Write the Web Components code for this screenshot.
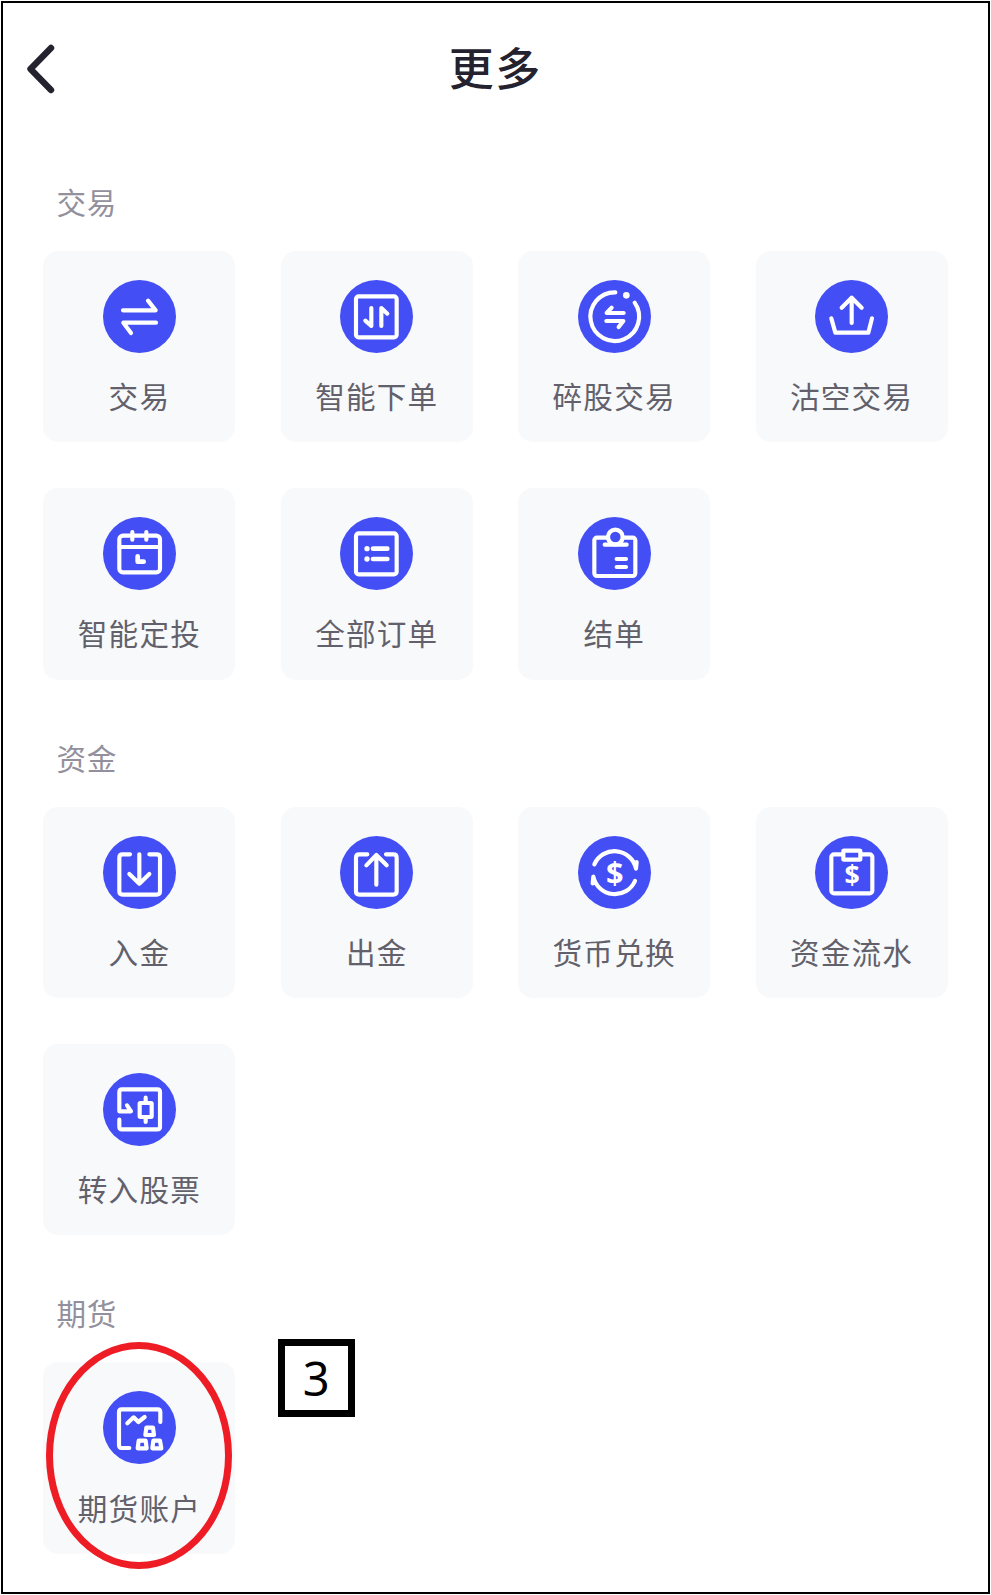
<!DOCTYPE html>
<html lang="zh-CN">
<head>
<meta charset="utf-8">
<title>更多</title>
<style>
  html, body {
    margin: 0;
    background: #fff;
  }
  body {
    padding: 1px;
    font-family: "Noto Sans CJK SC", sans-serif;
  }
</style>
</head>
<body>
<more-page>
  <page-header>更多</page-header>
  <menu-section heading="交易">
    <menu-tile icon="trade">交易</menu-tile>
    <menu-tile icon="smart">智能下单</menu-tile>
    <menu-tile icon="fraction">碎股交易</menu-tile>
    <menu-tile icon="short">沽空交易</menu-tile>
    <menu-tile icon="calendar">智能定投</menu-tile>
    <menu-tile icon="orders">全部订单</menu-tile>
    <menu-tile icon="statement">结单</menu-tile>
  </menu-section>
  <menu-section heading="资金">
    <menu-tile icon="deposit">入金</menu-tile>
    <menu-tile icon="withdraw">出金</menu-tile>
    <menu-tile icon="exchange">货币兑换</menu-tile>
    <menu-tile icon="cashflow">资金流水</menu-tile>
    <menu-tile icon="transfer">转入股票</menu-tile>
  </menu-section>
  <menu-section heading="期货">
    <menu-tile icon="futures" marked>期货账户</menu-tile>
    <step-badge>3</step-badge>
  </menu-section>
</more-page>

<script>
// icon strokes, drawn on a 219 x 219 grid inside the blue disc
const icons = {
  trade: `<path d="M60 91H158L135 62M159 128H61L84 159"/>`,
  smart: `
    <rect x="48" y="49" width="122" height="123" rx="8"/>
    <path d="M94 84V138L76 122M124 138V84L142 101"/>`,
  fraction: `
    <path d="M112 37A73 73 0 1 0 170 68"/>
    <circle class="solid" cx="145" cy="46" r="10"/>
    <path d="M137 99H86L101 83M85 123H136L122 141"/>`,
  short: `
    <path d="M110 129V53M80 83L110 53L140 83"/>
    <path d="M49 115L61 158H160L171 115"/>`,
  calendar: `
    <rect x="49" y="56" width="122" height="110" rx="11"/>
    <path d="M49 90H171M88 45V68M130 45V68"/>
    <path stroke-width="14" d="M104 118V134H122"/>`,
  orders: `
    <rect x="48" y="49" width="122" height="123" rx="8"/>
    <circle class="solid" cx="81" cy="95" r="8"/>
    <circle class="solid" cx="81" cy="126" r="8"/>
    <path stroke-width="14" d="M99 95H142M99 126H142"/>`,
  statement: `
    <rect x="49" y="62" width="123" height="115" rx="8"/>
    <circle class="disc" cx="112" cy="60" r="22"/>
    <path d="M80 83H146M116 126H144M116 150H144"/>`,
  deposit: `
    <path d="M81 55H59Q49 55 49 65V166Q49 176 59 176H161Q171 176 171 166V65Q171 55 161 55H139"/>
    <path d="M109 55V143M79 114L109 143L139 114"/>`,
  withdraw: `
    <path d="M82 55H58Q48 55 48 65V166Q48 176 58 176H160Q170 176 170 166V65Q170 55 160 55H138"/>
    <path d="M109 146V57M79 88L109 57L140 88"/>`,
  exchange: `
    <path d="M49 85A66 66 0 0 1 174 98L176 78L168 82"/>
    <path d="M171 135A66 66 0 0 1 46 122L44 142L52 138"/>
    <text x="110" y="145" font-size="92">$</text>`,
  cashflow: `
    <rect x="49" y="55" width="123" height="117" rx="8"/>
    <rect class="disc" x="85" y="44" width="51" height="27" rx="2"/>
    <text x="111" y="148" font-size="80">$</text>`,
  transfer: `
    <path d="M49 140V161Q49 169 57 169H163Q171 169 171 161V57Q171 49 163 49H57Q49 49 49 57V115H84L72 97"/>
    <rect x="110" y="90" width="36" height="42" rx="2"/>
    <path d="M128 74V88M128 134V147"/>`,
  futures: `
    <path d="M172 93V63Q172 55 164 55H56Q48 55 48 63V163Q48 171 56 171H79"/>
    <path d="M73 97L92 79L106 93L125 78"/>
    <path d="M127 132L130 110H150L153 132ZM104 172L107 149H128L131 172ZM148 172L151 149H171L175 172Z"/>`,
};

function attach(el, html) {
  const template = document.createElement('template');
  template.innerHTML = html;
  el.attachShadow({ mode: 'open' }).appendChild(template.content.cloneNode(true));
}

class MorePage extends HTMLElement {
  constructor() {
    super();
    attach(this, `
    <style>
    :host{
      display: block;
      box-sizing: border-box;
      width: 989px;
      height: 1593px;
      border: 2px solid #000;
    }
    main{
      display: flex;
      flex-direction: column;
      gap: 57px;
      padding: 0 37px 0 40.4px;
    }
    </style>
    <main><slot></slot></main>`);
  }
}

class PageHeader extends HTMLElement {
  constructor() {
    super();
    attach(this, `
    <style>
    :host{
      display: grid;
      grid-template-columns: 36px 1fr 36px;
      align-items: center;
      height: 84px;
      margin: 24px -18px 12.7px -20px;
      color: #24222e;
    }
    svg{
      display: block;
      width: 36px;
      height: 54px;
    }
    h1{
      margin: -5px 0 0 -2px;
      text-align: center;
      font-size: 45px;
      font-weight: 500;
      line-height: 66px;
      letter-spacing: 1.5px;
    }
    </style>
    <svg viewBox="0 0 36 54" fill="none" stroke="currentColor" stroke-width="6.4" stroke-linecap="round" stroke-linejoin="round">
      <path d="M28 6L7.5 27L28 48"/>
    </svg>
    <h1><slot></slot></h1>`);
  }
}

class MenuSection extends HTMLElement {
  constructor() {
    super();
    attach(this, `
    <style>
    :host{
      display: block;
    }
    h2{
      margin: -1px 0 27px;
      padding-left: 13px;
      font-size: 29.6px;
      font-weight: 400;
      line-height: 44px;
      letter-spacing: 0.7px;
      color: #92909c;
    }
    div{
      display: grid;
      grid-template-columns: repeat(4, 192px);
      gap: 45.3px 45.4px;
    }
    </style>
    <h2>${this.getAttribute('heading')}</h2>
    <div><slot></slot></div>`);
  }
}

class MenuTile extends HTMLElement {
  constructor() {
    super();
    attach(this, `
    <style>
    :host{
      position: relative;
      display: flex;
      flex-direction: column;
      align-items: center;
      box-sizing: border-box;
      height: 191.8px;
      padding-top: 29px;
      border-radius: 15px;
      background: #f8f9fb;
      color: #62616b;
    }
    svg{
      display: block;
      width: 73px;
      height: 73px;
      fill: none;
      stroke: #fff;
      stroke-width: 12.5px;
      stroke-linecap: round;
      stroke-linejoin: round;
    }
    .disc{
      fill: #434ef4;
    }
    .back{
      stroke: none;
    }
    .solid, text{
      fill: #fff;
      stroke: none;
    }
    text{
      font-family: "Noto Sans", sans-serif;
      font-weight: 700;
      text-anchor: middle;
    }
    p{
      margin: 21.4px 0 0;
      font-size: 29.6px;
      font-weight: 400;
      line-height: 44px;
      letter-spacing: 1.2px;
      white-space: nowrap;
    }
    .ring{
      position: absolute;
      box-sizing: border-box;
      left: 3px;
      top: -20px;
      width: 186px;
      height: 227px;
      border: 7.5px solid #ee1c24;
      border-radius: 50%;
    }
    </style>
    <svg viewBox="0 0 219 219">
      <circle class="disc back" cx="109.5" cy="109.5" r="109.5"/>
      ${icons[this.getAttribute('icon')]}
    </svg>
    <p><slot></slot></p>
    ${this.hasAttribute('marked') ? `<div class="ring"></div>` : ``}`);
  }
}

class StepBadge extends HTMLElement {
  constructor() {
    super();
    attach(this, `
    <style>
    :host{
      display: flex;
      align-items: center;
      justify-content: center;
      box-sizing: border-box;
      width: 77px;
      height: 78px;
      margin: -23px 0 0 -3px;
      border: 7px solid #000;
      background: #fff;
      color: #000;
      font: 47px/64px "Noto Sans", sans-serif;
    }
    </style>
    <slot></slot>`);
  }
}

window.customElements.define('more-page', MorePage);
window.customElements.define('page-header', PageHeader);
window.customElements.define('menu-section', MenuSection);
window.customElements.define('menu-tile', MenuTile);
window.customElements.define('step-badge', StepBadge);
</script>
</body>
</html>
